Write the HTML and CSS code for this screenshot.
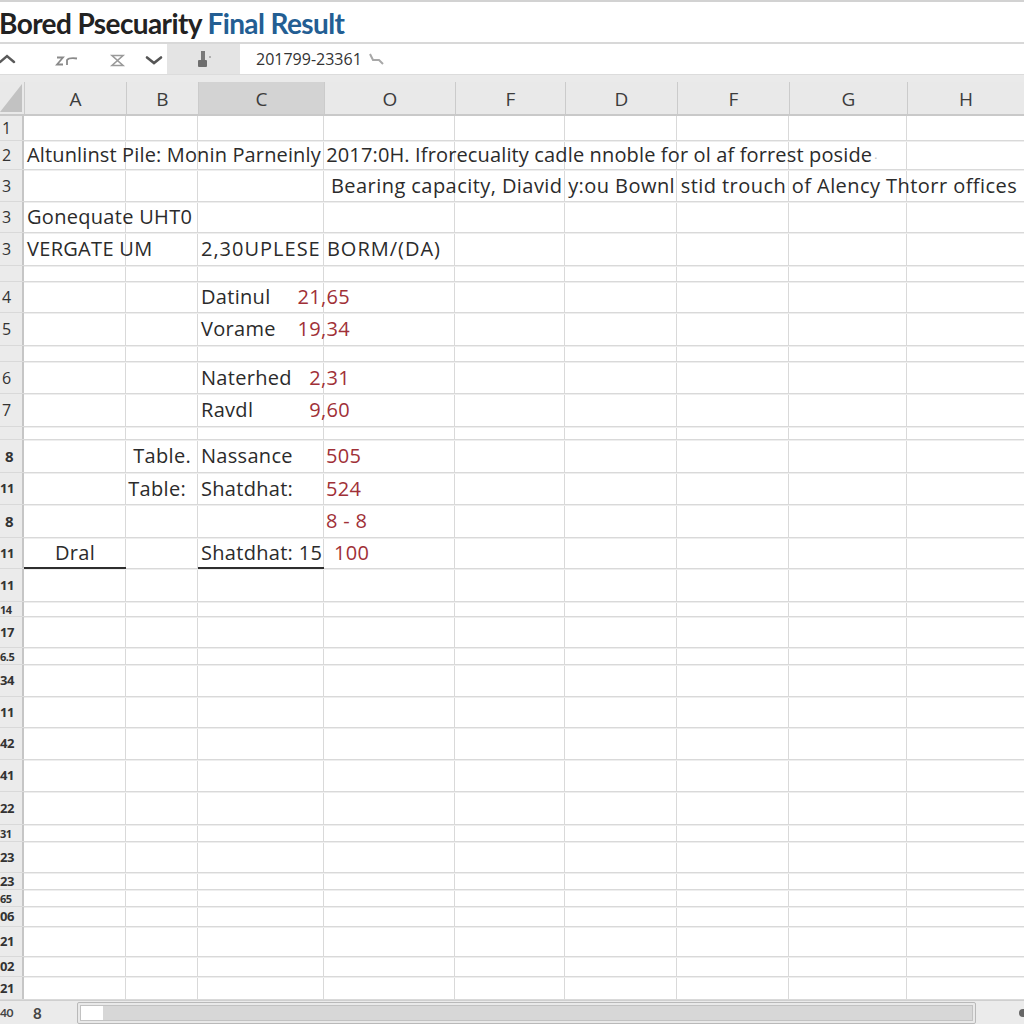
FILE: index.html
```html
<!DOCTYPE html>
<html lang="en">
<head>
<meta charset="utf-8">
<title>Bored Psecuarity Final Result</title>
<link rel="stylesheet" href="styles.css">
</head>
<body>
<div class="app">
  <header class="titlebar">
    <h1 class="title">Bored Psecuarity <span class="accent">Final Result</span></h1>
  </header>
  <div class="toolbar">
    <div class="tools">
      <svg class="ico" width="167" height="30" viewBox="0 44 167 30">
        <polyline points="0,62 7,56 14,62" fill="none" stroke="#5a5a5a" stroke-width="2.4" stroke-linecap="round"/>
        <path d="M57 57.5 H63 L57 64.5 H63" fill="none" stroke="#8a8a8a" stroke-width="1.8"/>
        <path d="M67 65 V60 Q69 57.5 77 58.5" fill="none" stroke="#8a8a8a" stroke-width="1.8"/>
        <path d="M112 55.5 H123 L117.5 60.5 L123 65.5 H112 L117.5 60.5 Z" fill="none" stroke="#9a9a9a" stroke-width="1.6"/>
        <polyline points="147,57.5 154,63 161,57.5" fill="none" stroke="#555" stroke-width="2.6" stroke-linecap="round"/>
      </svg>
    </div>
    <div class="namebox">
      <svg width="20" height="20" viewBox="0 0 20 20">
        <rect x="6" y="2" width="4" height="10" fill="#7a7a7a"/>
        <rect x="3" y="11" width="9" height="7" rx="1" fill="#6e6e6e"/>
        <rect x="14" y="7" width="2" height="2" fill="#b0b0b0"/>
      </svg>
    </div>
    <div class="formula">
      <span class="ftext">201799-23361</span>
      <svg width="18" height="14" viewBox="0 0 18 14">
        <path d="M2 2 L5 8 H11 L15 12" fill="none" stroke="#a8a8a8" stroke-width="2"/>
      </svg>
    </div>
  </div>
  <div class="band"></div>
  <div class="colhead">
    <div class="corner"><svg width="22" height="28" viewBox="0 0 22 28"><polygon points="22,0 22,28 0,28" fill="#c2c2c2"/></svg></div>
    <div class="ch">A</div>
    <div class="ch">B</div>
    <div class="ch sel">C</div>
    <div class="ch">O</div>
    <div class="ch">F</div>
    <div class="ch">D</div>
    <div class="ch">F</div>
    <div class="ch">G</div>
    <div class="ch">H</div>
  </div>
  <div class="grid">
    <div class="row h25"><span class="rh">1</span></div>
    <div class="row h29"><span class="rh">2</span><span class="c ca wide tight">Altunlinst Pile: Monin Parneinly 2017:0H. Ifrorecuality cadle nnoble for ol af forrest poside <span class="dot">.</span></span></div>
    <div class="row h32"><span class="rh">3</span><span class="c co wide pad7 loose">Bearing capacity, Diavid y:ou Bownl stid trouch of Alency Thtorr offices</span></div>
    <div class="row h31"><span class="rh">3</span><span class="c ca wide">Gonequate UHT0</span></div>
    <div class="row h33"><span class="rh">3</span><span class="c ca">VERGATE UM</span><span class="c cc wide spaced">2,30UPLESE BORM/(DA)</span></div>
    <div class="row h16"><span class="rh"></span></div>
    <div class="row h31"><span class="rh">4</span><span class="c cc pair"><span>Datinul</span><span class="num">21,65</span></span></div>
    <div class="row h33"><span class="rh">5</span><span class="c cc pair"><span>Vorame</span><span class="num">19,34</span></span></div>
    <div class="row h16"><span class="rh"></span></div>
    <div class="row h32"><span class="rh">6</span><span class="c cc pair"><span>Naterhed</span><span class="num">2,31</span></span></div>
    <div class="row h33"><span class="rh">7</span><span class="c cc pair"><span>Ravdl</span><span class="num">9,60</span></span></div>
    <div class="row h13"><span class="rh"></span></div>
    <div class="row h33"><span class="rh in">8</span><span class="c cb right p7">Table.</span><span class="c cc">Nassance</span><span class="c co num">505</span></div>
    <div class="row h32"><span class="rh sm">11</span><span class="c cb right p12">Table:</span><span class="c cc">Shatdhat:</span><span class="c co num">524</span></div>
    <div class="row h33"><span class="rh in">8</span><span class="c co num">8 - 8</span></div>
    <div class="row h31"><span class="rh sm">11</span><span class="c ca center under">Dral</span><span class="c cc under">Shatdhat: 15</span><span class="c co num p10">100</span></div>
    <div class="row h33"><span class="rh sm">11</span></div>
    <div class="row h15"><span class="rh xs">14</span></div>
    <div class="row h31"><span class="rh sm">17</span></div>
    <div class="row h17"><span class="rh xs">6.5</span></div>
    <div class="row h32"><span class="rh sm">34</span></div>
    <div class="row h31"><span class="rh sm">11</span></div>
    <div class="row h32"><span class="rh sm">42</span></div>
    <div class="row h32"><span class="rh sm">41</span></div>
    <div class="row h33"><span class="rh sm">22</span></div>
    <div class="row h17"><span class="rh xs">31</span></div>
    <div class="row h31"><span class="rh sm">23</span></div>
    <div class="row h17"><span class="rh sm">23</span></div>
    <div class="row h17"><span class="rh xs">65</span></div>
    <div class="row h20"><span class="rh sm">06</span></div>
    <div class="row h30"><span class="rh sm">21</span></div>
    <div class="row h20"><span class="rh sm">02</span></div>
    <div class="row h23"><span class="rh sm">21</span></div>
  </div>
  <footer class="statusbar">
    <span class="sheetno">40</span>
    <span class="sheettab">8</span>
    <div class="scroll">
      <div class="track"><span class="thumb"></span></div>
    </div>
    <span class="knob"></span>
  </footer>
</div>
</body>
</html>
```

FILE: styles.css
```css
* { box-sizing: border-box; }
html, body { margin: 0; padding: 0; background: #fff; }
body { font-family: Lato, "Open Sans", sans-serif; color: #2b2b2b; overflow: hidden; }
.app { width: 1024px; height: 1024px; overflow: hidden; display: flex; flex-direction: column; }

.titlebar { height: 44px; border-top: 2px solid #d2d2d2; border-bottom: 2px solid #d8d8d8; background: #fff; display: flex; align-items: center; padding-top: 2px; }
.title { margin: 0 0 0 -1px; font-size: 28px; font-weight: 700; letter-spacing: -0.6px; color: #222; white-space: nowrap; line-height: 1; }
.accent { color: #235e93; }

.toolbar { height: 30px; display: flex; background: #fff; }
.tools { width: 167px; position: relative; }
.ico { display: block; }
.namebox { width: 73px; background: #e4e4e4; display: flex; align-items: center; justify-content: center; padding-left: 2px; }
.formula { flex: 1; display: flex; align-items: center; padding-left: 16px; gap: 6px; }
.ftext { font-family: "Open Sans", sans-serif; font-size: 16px; color: #333; }

.band { height: 8px; background: #eaeaea; border-top: 1px solid #dcdcdc; }

.colhead { height: 34px; display: grid; grid-template-columns: 24px 102px 72px 126px 131px 110px 112px 112px 118px 117px; background: #e9e9e9; border-bottom: 2px solid #c9c9c9; }
.corner { display: flex; align-items: flex-end; padding-bottom: 2px; }
.ch { display: flex; align-items: center; justify-content: center; font-family: "Open Sans", sans-serif; font-size: 19px; color: #3c3c3c; border-left: 1px solid #cbcbcb; padding-top: 2px; }
.ch.sel { background: #d3d3d3; }

.grid {
  flex: 1;
  background:
    linear-gradient(#d9d9d9, #d9d9d9) 125px 0 / 1px 100% no-repeat,
    linear-gradient(#d9d9d9, #d9d9d9) 197px 0 / 1px 100% no-repeat,
    linear-gradient(#d9d9d9, #d9d9d9) 323px 0 / 1px 100% no-repeat,
    linear-gradient(#d9d9d9, #d9d9d9) 454px 0 / 1px 100% no-repeat,
    linear-gradient(#d9d9d9, #d9d9d9) 564px 0 / 1px 100% no-repeat,
    linear-gradient(#d9d9d9, #d9d9d9) 676px 0 / 1px 100% no-repeat,
    linear-gradient(#d9d9d9, #d9d9d9) 788px 0 / 1px 100% no-repeat,
    linear-gradient(#d9d9d9, #d9d9d9) 906px 0 / 1px 100% no-repeat,
    #fff;
}
.row { display: grid; grid-template-columns: 24px 102px 72px 126px 131px 110px 112px 112px 118px 117px; border-bottom: 1px solid #d9d9d9; box-shadow: 0 1px 0 #eeeeee; }
.h13 { height: 13px; } .h15 { height: 15px; } .h16 { height: 16px; } .h17 { height: 17px; }
.h20 { height: 20px; } .h23 { height: 23px; } .h25 { height: 25px; } .h29 { height: 29px; }
.h30 { height: 30px; } .h31 { height: 31px; } .h32 { height: 32px; } .h33 { height: 33px; }

.rh { grid-column: 1; grid-row: 1; background: #ebebeb; border-right: 2px solid #c6c6c6; display: flex; align-items: center; padding-left: 2px; font-family: "Open Sans", sans-serif; font-size: 16px; color: #333; line-height: 1; overflow: hidden; }
.rh.in { padding-left: 5px; font-weight: 700; font-size: 15px; }
.rh.sm { padding-left: 0; font-size: 13px; font-weight: 700; letter-spacing: -0.5px; }
.rh.xs { padding-left: 0; font-size: 11px; font-weight: 700; letter-spacing: -0.5px; }

.c { grid-row: 1; display: flex; align-items: center; white-space: nowrap; font-family: "Open Sans", sans-serif; font-size: 20px; letter-spacing: 0.3px; line-height: 1; padding-left: 3px; min-width: 0; }
.ca { grid-column: 2; }
.cb { grid-column: 3; }
.cc { grid-column: 4; }
.co { grid-column: 5; }
.wide { grid-column-end: -1; }
.tight { letter-spacing: 0.14px; }
.loose { letter-spacing: 0.44px; }
.spaced { letter-spacing: 1px; }
.pad7 { padding-left: 7px; }
.pair { grid-column: 4 / 6; padding-right: 105px; }
.pair .num { margin-left: auto; }
.num { color: #a03037; }
.co.num { padding-left: 2px; }
.co.num.p10 { padding-left: 10px; }
.right { justify-content: flex-end; }
.p7 { padding-right: 7px; }
.p12 { padding-right: 12px; }
.center { justify-content: center; padding-left: 0; }
.under { border-bottom: 2px solid #2e2e2e; margin-bottom: -1px; }
.dot { color: #bbb; font-size: 12px; margin-left: 2px; }

.statusbar { height: 24px; background: #ebebeb; border-top: 1px solid #cfcfcf; display: flex; align-items: center; position: relative; }
.sheetno { width: 33px; font-size: 12px; font-weight: 700; color: #444; letter-spacing: -0.5px; }
.sheettab { width: 44px; font-size: 15px; font-weight: 700; color: #444; }
.scroll { width: 899px; height: 22px; border: 1px solid #b9b9b9; border-radius: 2px; background: #e9e9e9; padding: 2px; display: flex; }
.track { flex: 1; display: flex; background: #d7d7d7; border: 1px solid #c2c2c2; }
.thumb { width: 22px; background: #fff; }
.knob { position: absolute; right: -3px; top: 8px; width: 8px; height: 8px; border-radius: 50%; background: #666; }
```
